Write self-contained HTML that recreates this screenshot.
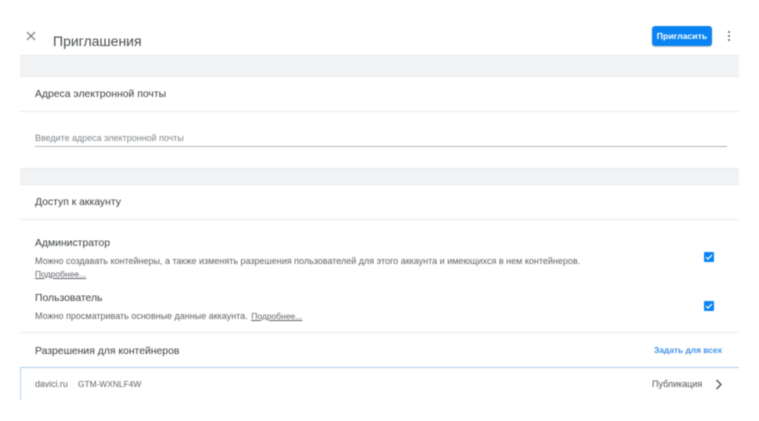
<!DOCTYPE html>
<html lang="ru">
<head>
<meta charset="utf-8">
<style>
html,body{margin:0;padding:0;background:#fff;}
#p{position:relative;width:759px;height:421px;overflow:hidden;background:#fff;font-family:"Liberation Sans",sans-serif;filter:blur(.45px);}
.t{position:absolute;white-space:nowrap;line-height:14px;color:#3c4043;}
.b{position:absolute;}
.h{font-size:10.4px;color:#3c4043;}
.s{font-size:9px;color:#5f6368;}
u{text-underline-offset:1px;font-size:8.5px;}
</style>
</head>
<body>
<div id="p">
  <svg class="b" style="left:26px;top:30.500px" width="10" height="10" viewBox="0 0 10 10"><path d="M1 1L9 9M9 1L1 9" stroke="#6b6f73" stroke-width="1.1" fill="none"/></svg>
  <div class="t" style="left:53px;top:34px;font-size:14px;color:#4a4e52">Приглашения</div>

  <div class="b" style="left:652px;top:26px;width:60px;height:20px;background:#0a84f2;border-radius:3px;box-shadow:0 1px 1px rgba(60,64,67,.3)"></div>
  <div class="t" style="left:652px;top:28.500px;width:60px;text-align:center;font-size:8.7px;font-weight:bold;color:#fff">Пригласить</div>
  <div class="b" style="left:728px;top:31px;width:2.4px;height:2.4px;border-radius:50%;background:#5f6368"></div>
  <div class="b" style="left:728px;top:35px;width:2.4px;height:2.4px;border-radius:50%;background:#5f6368"></div>
  <div class="b" style="left:728px;top:39px;width:2.4px;height:2.4px;border-radius:50%;background:#5f6368"></div>

  <div class="b" style="left:20px;top:55px;width:719px;height:22px;background:#f1f3f4;border-top:1px solid #e8eaed;box-sizing:border-box;border-bottom:1px solid #e8eaed"></div>
  <div class="t h" style="left:35px;top:88px">Адреса электронной почты</div>
  <div class="b" style="left:20px;top:111px;width:719px;height:1px;background:#e8eaed"></div>
  <div class="t" style="left:35px;top:131px;font-size:8.95px;color:#80868b">Введите адреса электронной почты</div>
  <div class="b" style="left:35px;top:146px;width:692px;height:1px;background:#b4b6b9"></div>

  <div class="b" style="left:20px;top:168px;width:719px;height:17px;background:#f1f3f4;border-top:1px solid #e8eaed;box-sizing:border-box;border-bottom:1px solid #e8eaed"></div>
  <div class="t h" style="left:35px;top:196px">Доступ к аккаунту</div>
  <div class="b" style="left:20px;top:219px;width:719px;height:1px;background:#e8eaed"></div>

  <div class="t h" style="left:35px;top:237px">Администратор</div>
  <div class="t s" style="left:35px;top:254px">Можно создавать контейнеры, а также изменять разрешения пользователей для этого аккаунта и имеющихся в нем контейнеров.</div>
  <div class="t s" style="left:35px;top:267px"><u>Подробнее...</u></div>
  <div class="t h" style="left:35px;top:292px">Пользователь</div>
  <div class="t s" style="left:35px;top:309px">Можно просматривать основные данные аккаунта. <u style="margin-left:1px">Подробнее...</u></div>

  <svg class="b" style="left:704px;top:252px" width="10" height="10" viewBox="0 0 10 10"><rect width="10" height="10" rx="1" fill="#0a84f2"/><path d="M2 5.2L4 7.1L8 3" stroke="#fff" stroke-width="1.2" fill="none"/></svg>
  <svg class="b" style="left:704px;top:301px" width="10" height="10" viewBox="0 0 10 10"><rect width="10" height="10" rx="1" fill="#0a84f2"/><path d="M2 5.2L4 7.1L8 3" stroke="#fff" stroke-width="1.2" fill="none"/></svg>

  <div class="b" style="left:20px;top:332px;width:719px;height:1px;background:#e8eaed"></div>
  <div class="t h" style="left:35px;top:345px">Разрешения для контейнеров</div>
  <div class="t" style="left:654px;top:343px;font-size:8.4px;font-weight:bold;color:#3f92e6">Задать для всех</div>

  <div class="b" style="left:20px;top:367px;width:719px;height:1px;background:#a9cdec"></div>
  <div class="b" style="left:20px;top:367px;width:1px;height:33px;background:#b9d6ef"></div>
  <div class="t s" style="left:35px;top:377px;font-size:8.8px">davici.ru</div>
  <div class="t s" style="left:78px;top:377px;font-size:8.4px">GTM-WXNLF4W</div>
  <div class="t s" style="left:652px;top:377px;color:#4f5357">Публикация</div>
  <svg class="b" style="left:715px;top:379px" width="8" height="11" viewBox="0 0 8 11"><path d="M1.5 1L6 5.5L1.5 10" stroke="#4a4e52" stroke-width="1.3" fill="none"/></svg>
</div>
</body>
</html>
